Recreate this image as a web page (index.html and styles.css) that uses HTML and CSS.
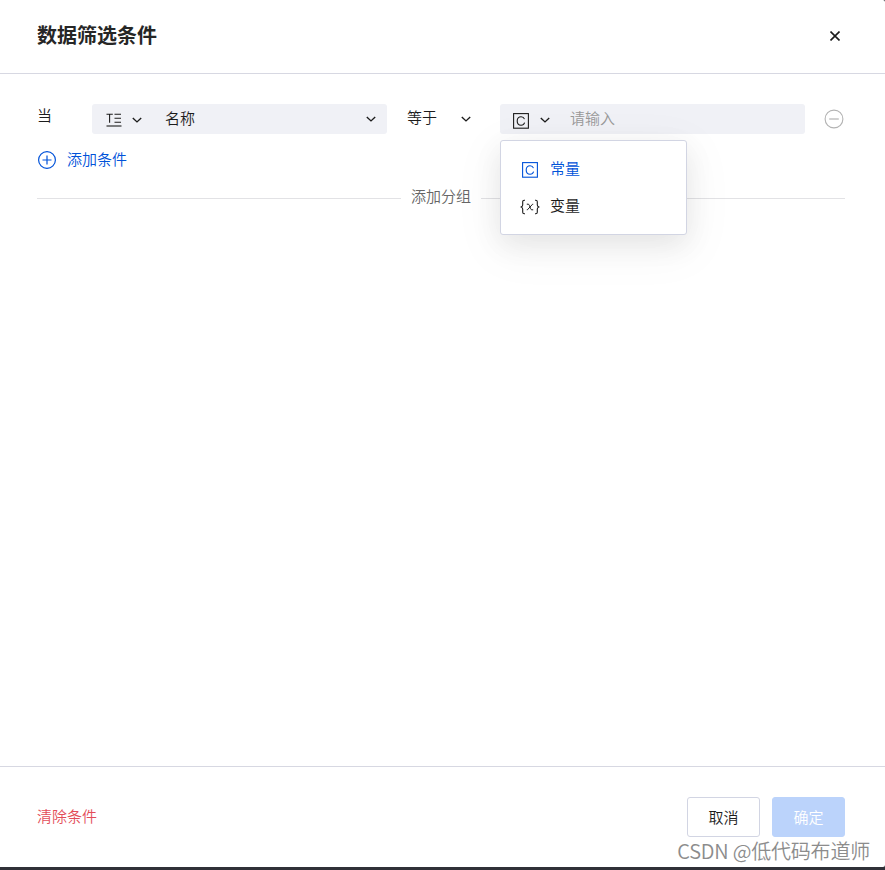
FILE: index.html
```
<!DOCTYPE html>
<html lang="zh-CN">
  <head>
    <meta charset="UTF-8" />
    <meta name="viewport" content="width=device-width, initial-scale=1.0" />
    <title>数据筛选条件</title>
    <link rel="stylesheet" href="styles.css">
  </head>

  <body>
    <!-- shared icons -->
    <svg class="sprite" width="0" height="0">
      <symbol id="chevron" viewBox="0 0 10 6">
        <path d="M0.8 0.9L5 4.9L9.2 0.9" fill="none" stroke="currentColor" stroke-width="1.4" />
      </symbol>
      <symbol id="constant" viewBox="0 0 16 16">
        <rect x="0.6" y="0.6" width="14.8" height="14.6" fill="none" stroke="currentColor" stroke-width="1.1" />
        <path d="M11.5 6.1C10.9 4.6 9.7 3.8 8.1 3.8C5.7 3.8 4.2 5.5 4.2 8C4.2 10.5 5.7 12.2 8.1 12.2C9.8 12.2 11.1 11.3 11.6 9.6" fill="none" stroke="currentColor" stroke-width="1.1" />
      </symbol>
    </svg>

    <div class="dialog">
      <header class="dialog_header">
        <h1>数据筛选条件</h1>
        <button class="close" aria-label="关闭">
          <svg width="10" height="10" viewBox="0 0 10 10">
            <path d="M0.5 0.5L9.5 9.5M9.5 0.5L0.5 9.5" stroke="currentColor" stroke-width="1.6" />
          </svg>
        </button>
      </header>

      <main class="dialog_body">
        <div class="condition">
          <span class="when">当</span>

          <div class="field name_field">
            <svg class="type_icon" width="16" height="14" viewBox="0 0 16 14">
              <path d="M0.5 1.3H6.8M3.6 1.3V9.8M8.5 1.3H15M8.5 5.3H15M8.5 9.3H15" fill="none" stroke="currentColor" stroke-width="1.1" />
              <path d="M0.5 13H15.5" stroke="currentColor" stroke-width="1.1" />
            </svg>
            <svg class="chevron"><use href="#chevron" /></svg>
            <span class="value">名称</span>
            <svg class="chevron last"><use href="#chevron" /></svg>
          </div>

          <div class="operator">
            <span>等于</span>
            <svg class="chevron"><use href="#chevron" /></svg>
          </div>

          <div class="field value_field">
            <svg class="constant"><use href="#constant" /></svg>
            <svg class="chevron"><use href="#chevron" /></svg>
            <span class="placeholder">请输入</span>

            <ul class="menu">
              <li class="valgt">
                <svg class="constant"><use href="#constant" /></svg>
                <span>常量</span>
              </li>
              <li>
                <svg class="variable" width="20" height="16" viewBox="0 0 20 16">
                  <path d="M5 1.2H4.3Q2.7 1.2 2.7 2.8V6Q2.7 7.8 0.6 8Q2.7 8.2 2.7 10V13.2Q2.7 14.8 4.3 14.8H5M15 1.2H15.7Q17.3 1.2 17.3 2.8V6Q17.3 7.8 19.4 8Q17.3 8.2 17.3 10V13.2Q17.3 14.8 15.7 14.8H15" fill="none" stroke="currentColor" stroke-width="1.1" />
                  <path d="M6.8 5.2H8.2Q9 5.2 9.4 6.4L10.6 9.6Q11 10.8 11.8 10.8H13.2M13.2 5.2H12.6L7.4 10.8H6.8" fill="none" stroke="currentColor" stroke-width="1" />
                </svg>
                <span>变量</span>
              </li>
            </ul>
          </div>

          <button class="remove" aria-label="删除">
            <svg width="20" height="20" viewBox="0 0 20 20">
              <circle cx="10" cy="10" r="8.9" fill="none" stroke="currentColor" stroke-width="1.1" />
              <path d="M5.2 10H14.8" stroke="currentColor" stroke-width="1.2" />
            </svg>
          </button>
        </div>

        <button class="add">
          <svg width="20" height="20" viewBox="0 0 20 20">
            <circle cx="10" cy="10" r="8.4" fill="none" stroke="currentColor" stroke-width="1.2" />
            <path d="M5.5 10H14.5M10 5.5V14.5" stroke="currentColor" stroke-width="1.2" />
          </svg>
          <span>添加条件</span>
        </button>

        <div class="divider"><span>添加分组</span></div>
      </main>

      <footer class="dialog_footer">
        <button class="clear">清除条件</button>
        <button class="btn">取消</button>
        <button class="btn primary">确定</button>
      </footer>
    </div>

    <p class="watermark">CSDN @低代码布道师</p>
  </body>
</html>
```
FILE: styles.css
```
* {
  box-sizing: border-box;
}

body {
  margin: 0;
  height: 870px;
  overflow: hidden;
  background-color: #303138;
  color: #1c1c1c;
  font-family: "Noto Sans CJK SC", sans-serif;
  font-size: 15px;
  font-weight: 350;
  line-height: 22px;
}

button {
  padding: 0;
  border: none;
  background: none;
  color: inherit;
  font: inherit;
}

svg {
  display: block;
  flex: none;
}

.sprite {
  position: absolute;
}

.dialog {
  display: flex;
  flex-direction: column;
  height: 867px;
  background-color: white;
  border-radius: 0 2px 2px 0;
}

.dialog_header {
  display: flex;
  justify-content: space-between;
  align-items: center;
  height: 74px;
  padding: 0 45px 2px 37px;
  border-bottom: 1px solid #d7d8e2;
}

h1 {
  margin: 0;
  padding-bottom: 2px;
  font-size: 20px;
  font-weight: 700;
  line-height: 30px;
  color: #262626;
}

.dialog_body {
  flex: 1;
  padding: 30px 40px 0 37px;
}

.condition {
  display: flex;
  align-items: center;
  height: 30px;
}

.when {
  width: 55px;
  padding-bottom: 8px;
}

.field {
  display: flex;
  align-items: center;
  height: 30px;
  background-color: #f0f1f6;
  border-radius: 3px;
}

.chevron {
  width: 10px;
  height: 6px;
  margin-top: 2px;
}

.name_field {
  width: 295px;
  padding: 0 11px 0 14px;
}

.type_icon {
  margin-right: 10px;
  margin-top: 2px;
}

.value {
  margin-left: 23px;
  padding-bottom: 3px;
}

.last {
  margin-left: auto;
  margin-top: 0;
}

.operator {
  display: flex;
  justify-content: space-between;
  align-items: center;
  width: 64px;
  margin: 0 29px 0 20px;
}

.operator span {
  padding-bottom: 5px;
}

.operator .chevron {
  margin-top: 0;
}

.value_field {
  position: relative;
  width: 305px;
  padding-left: 13px;
}

.constant {
  width: 16px;
  height: 16px;
  margin-top: 3px;
}

.value_field > .constant {
  margin-right: 11px;
}

.placeholder {
  margin-left: 20px;
  padding-bottom: 3px;
  color: #999;
}

.menu {
  position: absolute;
  top: 36px;
  left: 0;
  width: 187px;
  height: 95px;
  margin: 0;
  padding: 9px 0;
  list-style: none;
  background-color: white;
  border: 1px solid #d2d5e3;
  border-radius: 3px;
  box-shadow: 0 9px 28px rgba(0, 0, 0, 0.08), 0 12px 48px 8px rgba(0, 0, 0, 0.04);
}

.menu li {
  display: flex;
  align-items: center;
  height: 37px;
  padding: 0 0 1px 21px;
}

.menu li span {
  margin-left: 12px;
}

.menu .variable {
  margin-left: -2px;
  margin-top: 3px;
}

.menu .variable + span {
  margin-left: 10px;
}

.menu .valgt {
  color: #0052d9;
}

.remove {
  margin-left: 19px;
  color: #b3b3b3;
}

.add {
  display: flex;
  align-items: center;
  height: 22px;
  margin-top: 14px;
  color: #0052d9;
}

.add svg {
  margin-top: 2px;
}

.add span {
  margin-left: 10px;
}

.divider {
  display: flex;
  align-items: center;
  height: 22px;
  margin-top: 17px;
  color: #666;
}

.divider::before,
.divider::after {
  content: "";
  height: 1px;
  background-color: #e2e2e5;
  margin-top: 1px;
}

.divider::before {
  width: 364px;
}

.divider::after {
  flex: 1;
}

.divider span {
  padding: 0 10px 4px;
}

.dialog_footer {
  display: flex;
  align-items: center;
  height: 101px;
  padding: 0 40px 0 37px;
  border-top: 1px solid #d7d8e2;
}

.clear {
  margin-right: auto;
  padding-bottom: 2px;
  color: #e34d59;
}

.btn {
  width: 73px;
  height: 40px;
  margin-left: 12px;
  border: 1px solid #d2d5e3;
  border-radius: 3px;
}

.primary {
  border-color: #bbd3fb;
  background-color: #bbd3fb;
  color: white;
}

.watermark {
  position: absolute;
  right: 15px;
  top: 837px;
  margin: 0;
  font-size: 20px;
  line-height: 28px;
  letter-spacing: -0.2px;
  color: #8c8c8c;
  white-space: nowrap;
}
```
